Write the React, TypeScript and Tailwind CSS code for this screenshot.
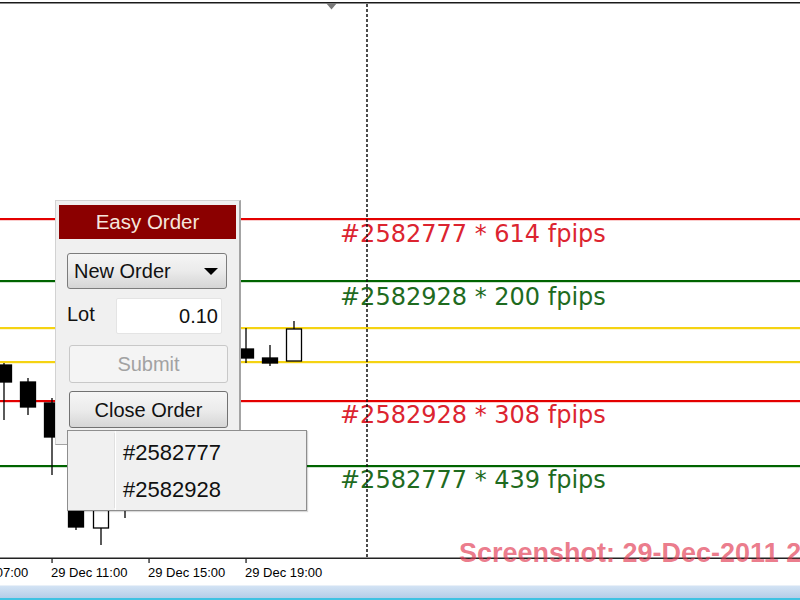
import React from 'react';

type Candle = { cx: number; top: number; bottom: number; hi: number; lo: number; hollow?: boolean };

const candles: Candle[] = [
  { cx: 4, top: 365, bottom: 382, hi: 363, lo: 420 },
  { cx: 28, top: 382, bottom: 407, hi: 378, lo: 415 },
  { cx: 52, top: 403, bottom: 437, hi: 398, lo: 475 },
  { cx: 76, top: 495, bottom: 527, hi: 490, lo: 530 },
  { cx: 101, top: 500, bottom: 528, hi: 495, lo: 545, hollow: true },
  { cx: 125, top: 485, bottom: 505, hi: 480, lo: 518 },
  { cx: 246, top: 349, bottom: 358, hi: 328, lo: 363 },
  { cx: 270, top: 358, bottom: 363, hi: 345, lo: 366 },
  { cx: 294, top: 329, bottom: 361, hi: 321, lo: 329, hollow: true },
];

const levels = [
  { y: 219, color: '#e40000' },
  { y: 281, color: '#006400' },
  { y: 328, color: '#f5d312' },
  { y: 362, color: '#f5d312' },
  { y: 401, color: '#e40000' },
  { y: 466, color: '#006400' },
];

const ticks = [52, 149, 246];

const Chart: React.FC = () => (
  <svg className="absolute left-0 top-0" width={800} height={585} viewBox="0 0 800 585">
    <rect x={0} y={2} width={800} height={1.5} fill="#1a1a1a" />
    <polygon points="326,3 337,3 331.5,9.5" fill="#7a7a7a" />
    {levels.map((l) => (
      <rect key={l.y} x={0} y={l.y - 1} width={800} height={2.2} fill={l.color} />
    ))}
    <line x1={367} y1={4} x2={367} y2={558} stroke="#111" strokeWidth={1.5} strokeDasharray="3 2" />
    {candles.map((c) => (
      <g key={c.cx}>
        <line x1={c.cx} y1={c.hi} x2={c.cx} y2={c.lo} stroke="#000" strokeWidth={1.3} />
        <rect
          x={c.cx - 7.5}
          y={c.top}
          width={15}
          height={c.bottom - c.top}
          fill={c.hollow ? '#fff' : '#000'}
          stroke="#000"
          strokeWidth={1.3}
        />
      </g>
    ))}
    <rect x={0} y={557.5} width={800} height={1.5} fill="#222" />
    {ticks.map((t) => (
      <rect key={t} x={t - 0.6} y={558} width={1.3} height={5} fill="#222" />
    ))}
  </svg>
);

const labels = [
  { top: 222, text: '#2582777 * 614 fpips', color: 'text-[#dc2430]' },
  { top: 285, text: '#2582928 * 200 fpips', color: 'text-[#1f6b1f]' },
  { top: 403, text: '#2582928 * 308 fpips', color: 'text-[#dc2430]' },
  { top: 468, text: '#2582777 * 439 fpips', color: 'text-[#1f6b1f]' },
];

const axis = [
  { left: -49, text: '29 Dec 07:00' },
  { left: 51, text: '29 Dec 11:00' },
  { left: 148, text: '29 Dec 15:00' },
  { left: 245, text: '29 Dec 19:00' },
];

const EasyOrder: React.FC = () => (
  <div className="absolute left-[55px] top-[200px] w-[186px] h-[245px] bg-[#f0f0f0] border border-[#d2d2d2] border-r-2 border-r-[#a4a4a4] border-b-[#a4a4a4] flex flex-col px-[3px] pt-[4px] font-['Liberation_Sans',Arial,sans-serif] text-[20px] leading-none">
    <div className="h-[34px] flex items-center justify-center bg-[#8b0000] text-[#f5e6dc] text-[20.5px]">Easy Order</div>
    <div className="mt-[14px] ml-[8px] w-[160px] h-[36px] flex items-center justify-between px-[6px] rounded-[3px] border border-[#7c7c7c] bg-gradient-to-b from-[#f5f5f5] via-[#ebebeb] to-[#d5d5d5] text-[#111]">
      <span>New Order</span>
      <svg width={14} height={7} viewBox="0 0 14 7" className="mr-[2px]">
        <polygon points="0,0 14,0 7,7" fill="#000" />
      </svg>
    </div>
    <div className="mt-[9px] h-[36px] flex items-center">
      <span className="ml-[8px] w-[49px] text-[#111] -mt-[5px]">Lot</span>
      <div className="w-[106px] h-[36px] bg-white border border-[#e4e4e4] rounded-[2px] flex items-center justify-end pr-[3px] text-[#111]">0.10</div>
    </div>
    <div className="mt-[11px] ml-[10px] w-[159px] h-[38px] flex items-center justify-center rounded-[3px] border border-[#c8c8c8] bg-[#f4f4f4] text-[#a2a2a2]">
      Submit
    </div>
    <div className="mt-[8px] ml-[10px] w-[159px] h-[37px] flex items-center justify-center rounded-[3px] border border-[#727272] bg-gradient-to-b from-[#f6f6f6] via-[#ececec] to-[#d6d6d6] text-[#111]">
      Close Order
    </div>
  </div>
);

const TicketMenu: React.FC = () => (
  <div className="absolute left-[67px] top-[430px] w-[240px] h-[81px] bg-[#f0f0f0] border border-[#8e8e8e] flex font-['Liberation_Sans',Arial,sans-serif] text-[22px] leading-none text-[#111] shadow-[1px_1px_1px_rgba(0,0,0,0.15)]">
    <div className="w-[47px] border-r border-[#e0e0e0] my-[2px]" />
    <div className="flex-1 flex flex-col pl-[7px] pt-[3px] border-l border-white">
      <div className="h-[37px] flex items-center">#2582777</div>
      <div className="h-[37px] flex items-center">#2582928</div>
    </div>
  </div>
);

export default function App() {
  return (
    <div className="w-[800px] h-[600px] flex flex-col bg-white overflow-hidden">
      <div className="relative h-[585px] overflow-hidden">
        {labels.map((l) => (
          <div
            key={l.top}
            className={`absolute left-[340px] whitespace-nowrap font-['DejaVu_Sans',Verdana,sans-serif] text-[24px] leading-none ${l.color}`}
            style={{ top: l.top }}
          >
            {l.text}
          </div>
        ))}
        <Chart />
        {axis.map((a) => (
          <div
            key={a.text}
            className="absolute top-[566px] whitespace-nowrap font-['Liberation_Sans',Arial,sans-serif] text-[13px] leading-none text-black"
            style={{ left: a.left }}
          >
            {a.text}
          </div>
        ))}
        <EasyOrder />
        <TicketMenu />
        <div className="absolute left-[459px] top-[540px] whitespace-nowrap font-['Liberation_Sans',Arial,sans-serif] font-bold text-[27px] leading-none text-[rgba(226,58,82,0.68)]">
          Screenshot: 29-Dec-2011 21:40
        </div>
      </div>
      <div className="h-[15px] border-t border-[#e9f0f8] bg-gradient-to-b from-[#d3e3f4] to-[#b5cde8] border-b-2 border-b-[#3fc2e2]" />
    </div>
  );
}
